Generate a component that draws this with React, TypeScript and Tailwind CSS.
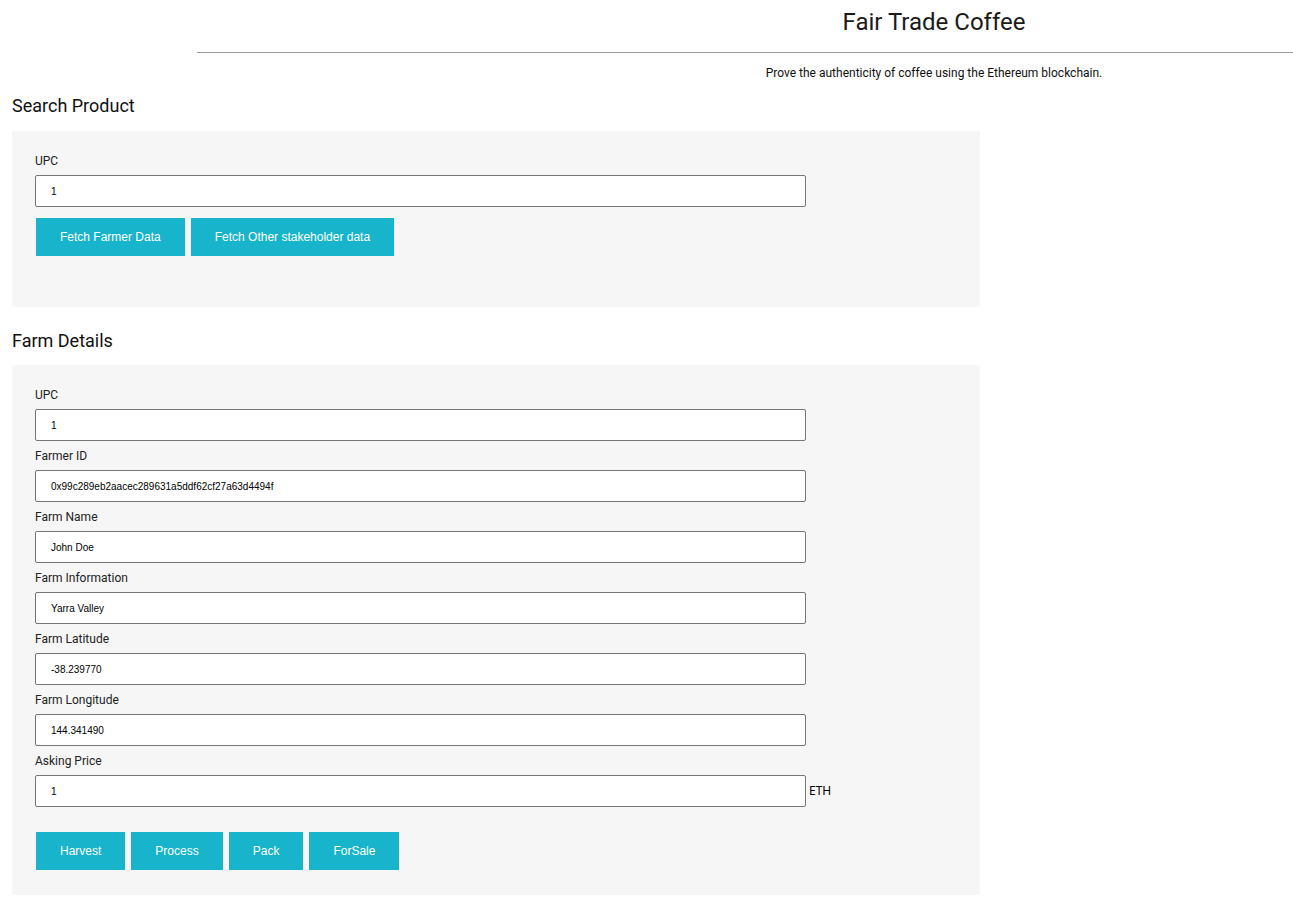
import React from "react";

const roboto = { fontFamily: "Roboto, 'Liberation Sans', sans-serif" };

function Field({ label, value }: { label: string; value: string }) {
  return (
    <div>
      <div className="h-[29px] pt-[8px] text-[12px] leading-[14px] text-[#222]" style={roboto}>
        {label}
      </div>
      <div className="w-[771px] h-[32px] bg-white border border-[#767676] rounded-[2px] pl-[15px] flex items-center text-[10px] text-black font-['Liberation_Sans',Arial,sans-serif]">
        {value}
      </div>
    </div>
  );
}

function Btn({ children }: { children: React.ReactNode }) {
  return (
    <div className="h-[38px] px-6 bg-[#17b4cb] text-white text-[12px] flex items-center justify-center font-['Liberation_Sans',Arial,sans-serif]">
      {children}
    </div>
  );
}

export default function App() {
  return (
    <div className="w-[1293px] min-h-[910px] bg-white text-[#222]" style={roboto}>
      <div className="pl-[575px] pt-[7px] text-center">
        <div className="text-[24px] leading-[30px] text-[#1a1a1a]">Fair Trade Coffee</div>
      </div>
      <div className="ml-[197px] mt-[15px] border-t border-[#999] h-0" />
      <div className="pl-[575px] pt-[13px] text-center text-[12px] leading-[14px] text-[#111]">
        Prove the authenticity of coffee using the Ethereum blockchain.
      </div>
      <div className="px-[12px]">
        <div className="mt-[15px] text-[18px] leading-[22px] text-[#111]">Search Product</div>
        <div className="mt-[14px] w-[968px] h-[176px] bg-[#f6f6f6] rounded-[3px] pl-[23px] pt-[15px]">
          <Field label="UPC" value="1" />
          <div className="flex gap-[6px] mt-[11px] ml-[1px]">
            <Btn>Fetch Farmer Data</Btn>
            <Btn>Fetch Other stakeholder data</Btn>
          </div>
        </div>
        <div className="mt-[23px] text-[18px] leading-[22px] text-[#111]">Farm Details</div>
        <div className="mt-[13px] w-[968px] bg-[#f6f6f6] rounded-[3px] pl-[23px] pt-[15px] pb-[25px]">
          <Field label="UPC" value="1" />
          <Field label="Farmer ID" value="0x99c289eb2aacec289631a5ddf62cf27a63d4494f" />
          <Field label="Farm Name" value="John Doe" />
          <Field label="Farm Information" value="Yarra Valley" />
          <Field label="Farm Latitude" value="-38.239770" />
          <Field label="Farm Longitude" value="144.341490" />
          <div className="flex items-end">
            <Field label="Asking Price" value="1" />
            <div className="h-[32px] pl-[3px] pt-[8px] text-[12px] leading-[16px] text-black font-['Noto_Sans',sans-serif]">ETH</div>
          </div>
          <div className="flex gap-[6px] mt-[25px] ml-[1px]">
            <Btn>Harvest</Btn>
            <Btn>Process</Btn>
            <Btn>Pack</Btn>
            <Btn>ForSale</Btn>
          </div>
        </div>
      </div>
    </div>
  );
}
